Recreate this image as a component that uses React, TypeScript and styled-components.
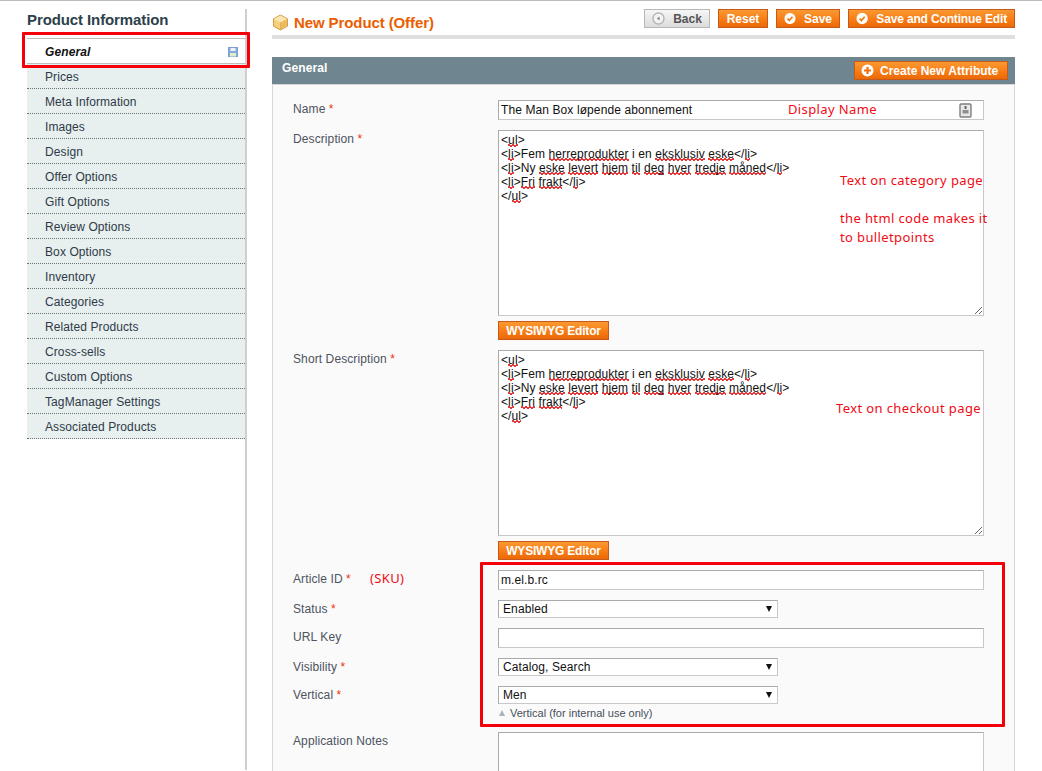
import React from "react";
import styled, { createGlobalStyle } from "styled-components";

const Global = createGlobalStyle`
  html, body { margin: 0; padding: 0; background: #fff; height: 771px; overflow: hidden; }
  body { font-family: "Liberation Sans", Arial, sans-serif; font-size: 12px; color: #2f2f2f; letter-spacing: 0.1px; }
`;

const Page = styled.div`
  position: relative;
  display: flex;
  align-items: flex-start;
  height: 770px;
  overflow: hidden;
  border-top: 1px solid #bbb;
  padding-left: 27px;
`;

const Sidebar = styled.aside`
  flex: none;
  width: 218px;
  height: 761px;
  margin-top: 8px;
  margin-right: 25px;
  border-right: 2px solid #ccd0d0;
`;

const SidebarTitle = styled.h3`
  margin: 0;
  height: 29px;
  font-size: 15px;
  line-height: 21px;
  font-weight: bold;
  letter-spacing: -0.1px;
  color: #2d3f4b;
  box-sizing: border-box;
`;

const TabList = styled.ul`
  list-style: none;
  margin: 0;
  padding: 0;
`;

const Tab = styled.li`
  display: flex;
  align-items: center;
  justify-content: space-between;
  box-sizing: border-box;
  height: 25px;
  padding: 2px 7px 0 18px;
  background: #e7efef;
  border-bottom: 1px dotted #6b7473;
  color: #2f3a47;
  line-height: 15px;
`;

const ActiveTab = styled(Tab)`
  height: 26px;
  padding-top: 2px;
  background: #fff;
  border-top: 1px solid #bdbdbd;
  border-bottom: 1px solid #bdbdbd;
  color: #111;
  font-weight: bold;
  font-style: italic;
`;

const Main = styled.main`
  flex: none;
  width: 743px;
`;

const Header = styled.header`
  display: flex;
  align-items: flex-start;
  justify-content: space-between;
  box-sizing: border-box;
  height: 38px;
  padding-top: 8px;
  border-bottom: 4px solid #dfdfdf;
`;

const TitleGroup = styled.div`
  display: flex;
  align-items: center;
  gap: 5px;
  height: 26px;
`;

const Title = styled.h3`
  margin: 0;
  font-size: 15px;
  font-weight: bold;
  letter-spacing: -0.1px;
  color: #eb5e00;
`;

const Actions = styled.div`
  display: flex;
  gap: 8px;
`;

const OrangeButton = styled.button<{ $width?: number }>`
  display: inline-flex;
  align-items: center;
  justify-content: center;
  gap: 8px;
  box-sizing: border-box;
  width: ${(p) => (p.$width ? `${p.$width}px` : "auto")};
  height: 19px;
  padding: 0 7px;
  border: 1px solid #c8591a;
  background: linear-gradient(#fb9a32, #f77c16 55%, #ea6a06);
  color: #fff;
  font: bold 12px "Liberation Sans", Arial, sans-serif;
  white-space: nowrap;
`;

const BackButton = styled(OrangeButton)`
  border: 1px solid #b7b7b7;
  background: linear-gradient(#f6f6f6, #dcdcdc);
  color: #555;
`;

const LongButton = styled(OrangeButton)`
  letter-spacing: -0.15px;
`;

const AttributeButton = styled(OrangeButton)`
  justify-content: flex-start;
  gap: 6px;
  padding: 0 6px;
`;

const SectionBar = styled.div`
  display: flex;
  align-items: flex-start;
  justify-content: space-between;
  box-sizing: border-box;
  height: 27px;
  margin-top: 18px;
  padding: 4px 7px 0 10px;
  background: #6f8690;
`;

const SectionTitle = styled.h4`
  margin: 0;
  font-size: 12px;
  line-height: 14px;
  font-weight: bold;
  color: #fff;
`;

const Panel = styled.section`
  box-sizing: border-box;
  height: 700px;
  padding: 15px 0 0 20px;
  background: #fafafa;
  border: 1px solid #d6d6d6;
`;

const Row = styled.div<{ $bottom?: number }>`
  display: grid;
  grid-template-columns: 205px 1fr;
  padding-bottom: ${(p) => p.$bottom ?? 10}px;
`;

const Label = styled.label`
  padding-top: 2px;
  line-height: 15px;
  color: #4d5360;
`;

const Required = styled.span`
  color: #eb340a;
`;

const ValueCell = styled.div`
  position: relative;
  display: flex;
  flex-direction: column;
  align-items: flex-start;
`;

const TextInput = styled.input`
  box-sizing: border-box;
  width: 486px;
  height: 20px;
  padding: 0 2px;
  background: #fff;
  border: 1px solid #c8c8c8;
  border-top-color: #aaa;
  border-left-color: #aaa;
  border-radius: 0;
  outline: none;
  font: 12px "Liberation Sans", Arial, sans-serif;
  letter-spacing: 0.1px;
  color: #111;
`;

const TextArea = styled.div<{ $height: number }>`
  box-sizing: border-box;
  width: 486px;
  height: ${(p) => p.$height}px;
  padding: 2px 2px;
  background: #fff;
  border: 1px solid #c8c8c8;
  border-top-color: #aaa;
  border-left-color: #aaa;
  font-size: 12px;
  line-height: 14px;
  color: #111;
  overflow: hidden;
  resize: both;
`;

const CodeLine = styled.div`
  height: 14px;
  white-space: pre;
`;

const Typo = styled.span`
  background:
    linear-gradient(45deg, transparent 38%, #e23a3a 38%, #e23a3a 62%, transparent 62%) 0 100% / 4px 3px repeat-x,
    linear-gradient(-45deg, transparent 38%, #e23a3a 38%, #e23a3a 62%, transparent 62%) 2px 100% / 4px 3px repeat-x;
`;

const EditorButton = styled(OrangeButton)`
  margin-top: 5px;
  width: 111px;
  letter-spacing: -0.2px;
`;

const SelectBox = styled.div`
  display: flex;
  align-items: center;
  justify-content: space-between;
  box-sizing: border-box;
  width: 280px;
  height: 18px;
  padding: 0 5px 0 4px;
  background: #fff;
  border: 1px solid #c8c8c8;
  border-top-color: #aaa;
  border-left-color: #aaa;
  color: #111;
`;

const Caret = styled.span`
  width: 0;
  height: 0;
  border-left: 3.5px solid transparent;
  border-right: 3.5px solid transparent;
  border-top: 6px solid #111;
`;

const NoteLine = styled.div`
  display: flex;
  align-items: center;
  gap: 5px;
  margin-top: 2px;
  padding-left: 1px;
  font-size: 11px;
  line-height: 14px;
  letter-spacing: 0;
  color: #444f5a;
`;

const NoteArrow = styled.span`
  width: 0;
  height: 0;
  border-left: 3.5px solid transparent;
  border-right: 3.5px solid transparent;
  border-bottom: 6px solid #a9b4ba;
`;

const ScopeIcon = styled.svg`
  position: absolute;
  left: 461px;
  top: 3px;
`;

const Annotation = styled.span<{ $left: number; $top: number }>`
  position: absolute;
  left: ${(p) => p.$left}px;
  top: ${(p) => p.$top}px;
  font-family: "Noto Sans", sans-serif;
  font-size: 13px;
  line-height: 19px;
  letter-spacing: 0.38px;
  color: #f00a14;
  white-space: pre;
`;

const RedBox = styled.div<{ $l: number; $t: number; $w: number; $h: number }>`
  position: absolute;
  left: ${(p) => p.$l}px;
  top: ${(p) => p.$t}px;
  width: ${(p) => p.$w}px;
  height: ${(p) => p.$h}px;
  box-sizing: border-box;
  border: 3px solid #f5000a;
  border-radius: 1px;
  pointer-events: none;
`;

const CheckIcon = () => (
  <svg width="13" height="13" viewBox="0 0 13 13">
    <circle cx="6.5" cy="6.5" r="6" fill="#fff" />
    <path d="M3.8 6.6l1.9 2 3.5-4" fill="none" stroke="#f0770f" strokeWidth="1.8" />
  </svg>
);

const PlusIcon = () => (
  <svg width="13" height="13" viewBox="0 0 13 13">
    <circle cx="6.5" cy="6.5" r="6" fill="#fff" />
    <path d="M6.5 3v7M3 6.5h7" stroke="#ee6f0c" strokeWidth="2.2" />
  </svg>
);

const BackIcon = () => (
  <svg width="13" height="13" viewBox="0 0 13 13">
    <circle cx="6.5" cy="6.5" r="5.5" fill="#f3f3f3" stroke="#b5b5b5" strokeWidth="1.4" />
    <path d="M7.6 4.4v4.2L4.8 6.5z" fill="#8b8b8b" />
  </svg>
);

const BoxIcon = () => (
  <svg width="17" height="17" viewBox="0 0 17 17">
    <path d="M8.5 1L15.5 4.8V12.2L8.5 16L1.5 12.2V4.8Z" fill="#f5cf7c" stroke="#cf9a45" />
    <path d="M1.8 5L8.5 8.6L15.2 5L8.5 1.4Z" fill="#fbe6b0" />
    <path d="M8.5 8.6V15.6" stroke="#dca653" />
    <path d="M8.5 8.6L15.2 5V12L8.5 15.6Z" fill="#eebb5e" />
  </svg>
);

const SaveIcon = () => (
  <svg width="10" height="10" viewBox="0 0 10 10">
    <rect x="0.5" y="0.5" width="9" height="9" fill="#8aaade" stroke="#7c9dd6" />
    <rect x="2.5" y="1" width="5" height="3" fill="#eef3fb" />
    <rect x="2" y="6" width="6" height="3.5" fill="#dcefc6" />
  </svg>
);

const tabs = [
  "Prices", "Meta Information", "Images", "Design", "Offer Options", "Gift Options",
  "Review Options", "Box Options", "Inventory", "Categories", "Related Products",
  "Cross-sells", "Custom Options", "TagManager Settings", "Associated Products",
];

const HtmlLines = () => (
  <>
    <CodeLine>{"<"}<Typo>ul</Typo>{">"}</CodeLine>
    <CodeLine>{"<"}<Typo>li</Typo>{">Fem "}<Typo>herreprodukter</Typo>{" i en "}<Typo>eksklusiv</Typo>{" "}<Typo>eske</Typo>{"</"}<Typo>li</Typo>{">"}</CodeLine>
    <CodeLine>{"<"}<Typo>li</Typo>{">Ny "}<Typo>eske</Typo>{" "}<Typo>levert</Typo>{" "}<Typo>hjem</Typo>{" "}<Typo>til</Typo>{" "}<Typo>deg</Typo>{" "}<Typo>hver</Typo>{" "}<Typo>tredje</Typo>{" "}<Typo>måned</Typo>{"</"}<Typo>li</Typo>{">"}</CodeLine>
    <CodeLine>{"<"}<Typo>li</Typo>{">"}<Typo>Fri</Typo>{" "}<Typo>frakt</Typo>{"</"}<Typo>li</Typo>{">"}</CodeLine>
    <CodeLine>{"</"}<Typo>ul</Typo>{">"}</CodeLine>
  </>
);

export default function App() {
  return (
    <Page>
      <Global />
      <Sidebar>
        <SidebarTitle>Product Information</SidebarTitle>
        <TabList>
          <ActiveTab>General<SaveIcon /></ActiveTab>
          {tabs.map((t) => <Tab key={t}>{t}</Tab>)}
        </TabList>
      </Sidebar>
      <Main>
        <Header>
          <TitleGroup>
            <BoxIcon />
            <Title>New Product (Offer)</Title>
          </TitleGroup>
          <Actions>
            <BackButton $width={66}><BackIcon />Back</BackButton>
            <OrangeButton $width={50}>Reset</OrangeButton>
            <OrangeButton $width={64}><CheckIcon />Save</OrangeButton>
            <LongButton $width={167}><CheckIcon />Save and Continue Edit</LongButton>
          </Actions>
        </Header>
        <SectionBar>
          <SectionTitle>General</SectionTitle>
          <AttributeButton $width={154}><PlusIcon />Create New Attribute</AttributeButton>
        </SectionBar>
        <Panel>
          <Row>
            <Label>Name <Required>*</Required></Label>
            <ValueCell>
              <TextInput readOnly value="The Man Box løpende abonnement" />
              <ScopeIcon width="13" height="15" viewBox="0 0 13 15">
                <rect x="1" y="1" width="11" height="13" rx="1" fill="#e8e8e8" stroke="#7f7f7f" strokeWidth="1.4" />
                <rect x="5.5" y="3" width="2" height="3" fill="#666" />
                <path d="M3.5 7h6v3.5h-6z" fill="#8f8f8f" />
              </ScopeIcon>
              <Annotation $left={290} $top={0}>Display Name</Annotation>
            </ValueCell>
          </Row>
          <Row>
            <Label>Description <Required>*</Required></Label>
            <ValueCell>
              <TextArea $height={186}><HtmlLines /></TextArea>
              <Annotation $left={342} $top={41}>{"Text on category page\n\nthe html code makes it\nto bulletpoints"}</Annotation>
              <EditorButton>WYSIWYG Editor</EditorButton>
            </ValueCell>
          </Row>
          <Row>
            <Label>Short Description <Required>*</Required></Label>
            <ValueCell>
              <TextArea $height={186}><HtmlLines /></TextArea>
              <Annotation $left={338} $top={49}>Text on checkout page</Annotation>
              <EditorButton>WYSIWYG Editor</EditorButton>
            </ValueCell>
          </Row>
          <Row>
            <Label>Article ID <Required>*</Required></Label>
            <ValueCell>
              <TextInput readOnly value="m.el.b.rc" />
              <Annotation $left={-128} $top={-1}>(SKU)</Annotation>
            </ValueCell>
          </Row>
          <Row>
            <Label>Status <Required>*</Required></Label>
            <ValueCell><SelectBox>Enabled<Caret /></SelectBox></ValueCell>
          </Row>
          <Row>
            <Label>URL Key</Label>
            <ValueCell><TextInput readOnly value="" /></ValueCell>
          </Row>
          <Row>
            <Label>Visibility <Required>*</Required></Label>
            <ValueCell><SelectBox>Catalog, Search<Caret /></SelectBox></ValueCell>
          </Row>
          <Row $bottom={12}>
            <Label>Vertical <Required>*</Required></Label>
            <ValueCell>
              <SelectBox>Men<Caret /></SelectBox>
              <NoteLine><NoteArrow />Vertical (for internal use only)</NoteLine>
            </ValueCell>
          </Row>
          <Row>
            <Label>Application Notes</Label>
            <ValueCell><TextArea $height={100} /></ValueCell>
          </Row>
        </Panel>
      </Main>
      <RedBox $l={22} $t={31} $w={228} $h={36} />
      <RedBox $l={480} $t={561} $w={525} $h={165} />
    </Page>
  );
}
